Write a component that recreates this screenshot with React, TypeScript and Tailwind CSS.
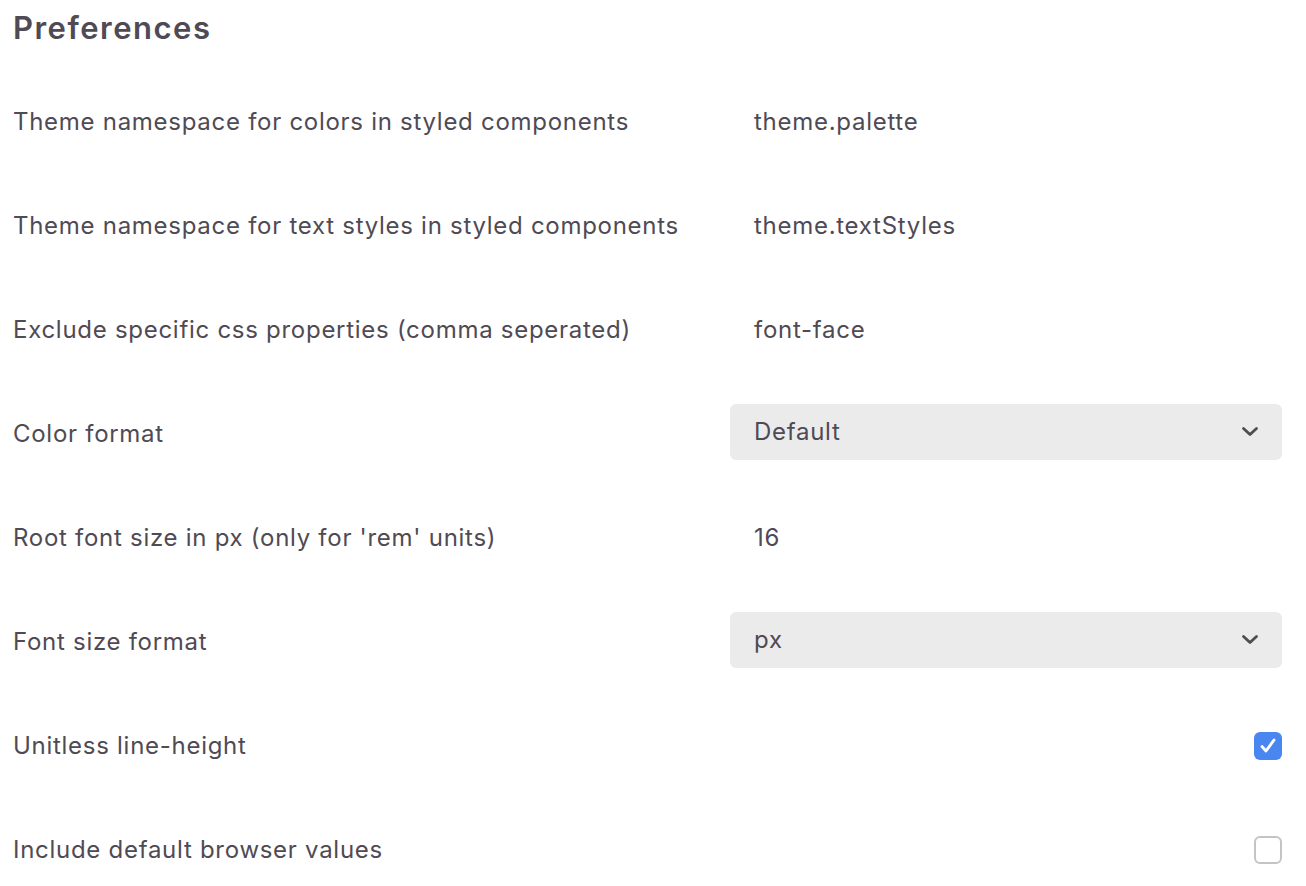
import React from 'react';

type Row =
    | { label: string; kind: 'text'; value: string }
    | { label: string; kind: 'select'; value: string }
    | { label: string; kind: 'check'; checked: boolean };

const rows: Row[] = [
    { label: 'Theme namespace for colors in styled components', kind: 'text', value: 'theme.palette' },
    { label: 'Theme namespace for text styles in styled components', kind: 'text', value: 'theme.textStyles' },
    { label: 'Exclude specific css properties (comma seperated)', kind: 'text', value: 'font-face' },
    { label: 'Color format', kind: 'select', value: 'Default' },
    { label: "Root font size in px (only for 'rem' units)", kind: 'text', value: '16' },
    { label: 'Font size format', kind: 'select', value: 'px' },
    { label: 'Unitless line-height', kind: 'check', checked: true },
    { label: 'Include default browser values', kind: 'check', checked: false },
];

const Chevron = () => (
    <svg width="18" height="18" viewBox="0 0 18 18" fill="none">
        <path d="M2.5 5.5L9 11.5L15.5 5.5" stroke="#4f4a54" strokeWidth="2.8" strokeLinecap="round" strokeLinejoin="round" />
    </svg>
);

const Checkbox = ({ checked }: { checked: boolean }) =>
    checked ? (
        <div className="w-[28px] h-[28px] rounded-[6px] bg-[#4a86f0] flex items-center justify-center">
            <svg width="20" height="20" viewBox="0 0 20 20" fill="none">
                <path d="M4 10.5L8 15L16 4" stroke="white" strokeWidth="2.8" strokeLinecap="round" strokeLinejoin="round" />
            </svg>
        </div>
    ) : (
        <div className="w-[28px] h-[28px] rounded-[6px] border-2 border-[#c4c4c4] bg-white" />
    );

export default function App() {
    return (
        <div className="w-[1306px] h-[886px] overflow-hidden bg-white text-[#4f4a54] pl-[13px] pr-[24px] font-['Inter','Liberation_Sans',sans-serif] tracking-[0.72px]">
            <h1 className="h-[70px] pt-[6px] text-[31px] font-semibold leading-[44px] tracking-[1.5px]">Preferences</h1>

            {rows.map((row) => (
                <div key={row.label} className="h-[104px] flex items-center justify-between">
                    <span className="text-[24px] leading-[32px]">{row.label}</span>
                    {row.kind === 'text' && (
                        <div className="w-[552px] pl-[24px] text-[24px] leading-[32px]">{row.value}</div>
                    )}
                    {row.kind === 'select' && (
                        <div className="w-[552px] h-[56px] -mt-[4px] rounded-[6px] bg-[#ebebeb] pl-[24px] pr-[23px] flex items-center justify-between">
                            <span className="text-[24px] leading-[32px]">{row.value}</span>
                            <Chevron />
                        </div>
                    )}
                    {row.kind === 'check' && <Checkbox checked={row.checked} />}
                </div>
            ))}
        </div>
    );
}
